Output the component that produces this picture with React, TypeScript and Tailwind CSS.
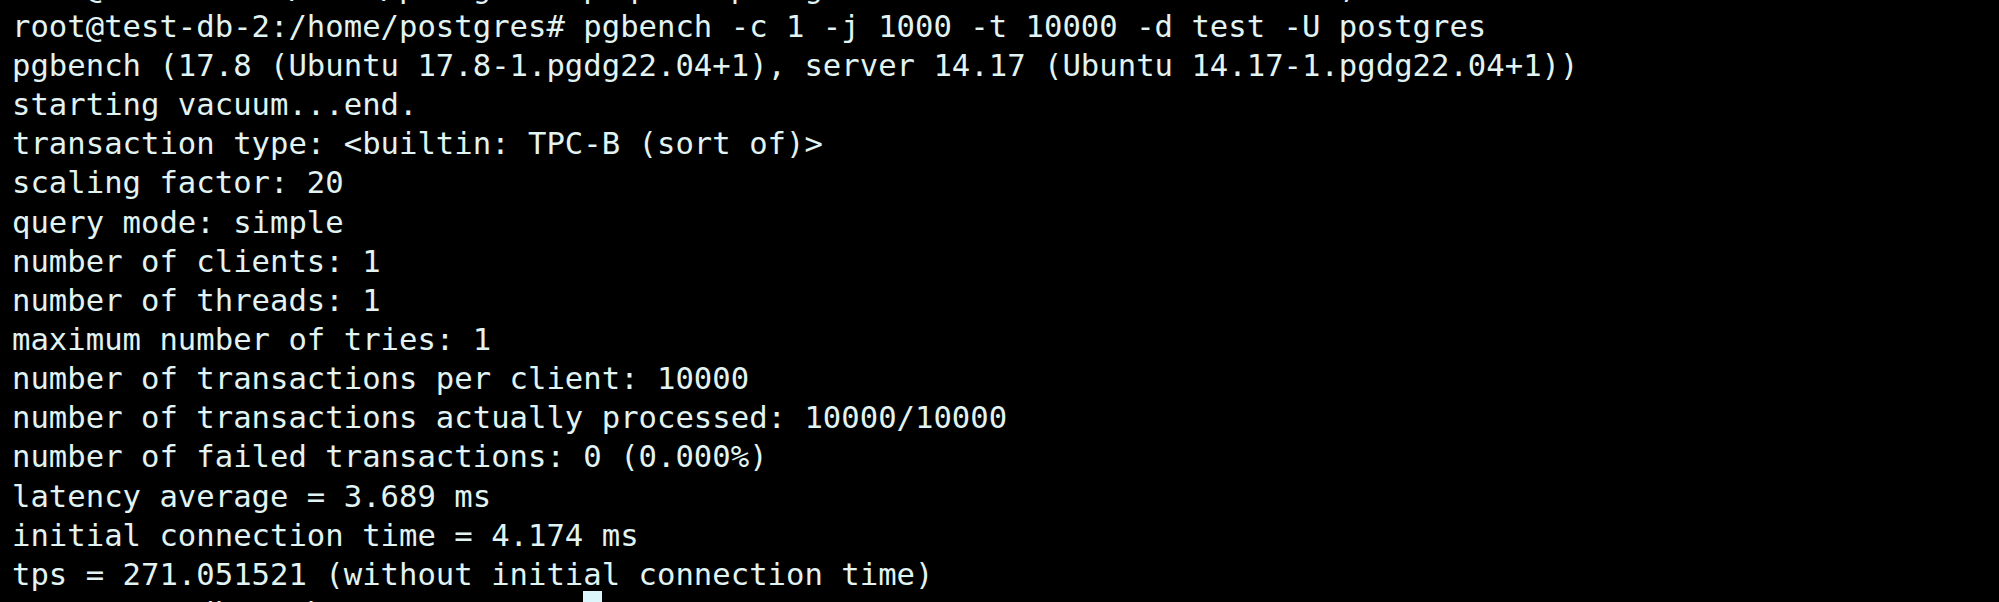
import React from "react";

const lines = [
  "root@test-db-2:/home/postgres# pgbench -c 1 -j 1000 -t 10000 -d test -U postgres",
  "pgbench (17.8 (Ubuntu 17.8-1.pgdg22.04+1), server 14.17 (Ubuntu 14.17-1.pgdg22.04+1))",
  "starting vacuum...end.",
  "transaction type: <builtin: TPC-B (sort of)>",
  "scaling factor: 20",
  "query mode: simple",
  "number of clients: 1",
  "number of threads: 1",
  "maximum number of tries: 1",
  "number of transactions per client: 10000",
  "number of transactions actually processed: 10000/10000",
  "number of failed transactions: 0 (0.000%)",
  "latency average = 3.689 ms",
  "initial connection time = 4.174 ms",
  "tps = 271.051521 (without initial connection time)",
];

export default function App() {
  return (
    <div className="w-[1999px] h-[602px] overflow-hidden bg-black">
      <div
        className="-mt-[32.4px] pl-[12px] text-[30.62px] leading-[39.15px] text-[#e1f3f3] whitespace-pre"
        style={{ fontFamily: '"DejaVu Sans Mono", "Liberation Mono", monospace' }}
      >
        <div>{"root@test-db-2:/home/postgres# psql -U postgres -c 'create database test;'"}</div>
        {lines.map((l, i) => (
          <div key={i}>{l}</div>
        ))}
        <div className="flex items-start">
          <span>{"root@test-db-2:/home/postgres# "}</span>
          <span className="mt-[-3px] h-[39px] w-[18.5px] bg-[#dcf6fb]" />
        </div>
      </div>
    </div>
  );
}
